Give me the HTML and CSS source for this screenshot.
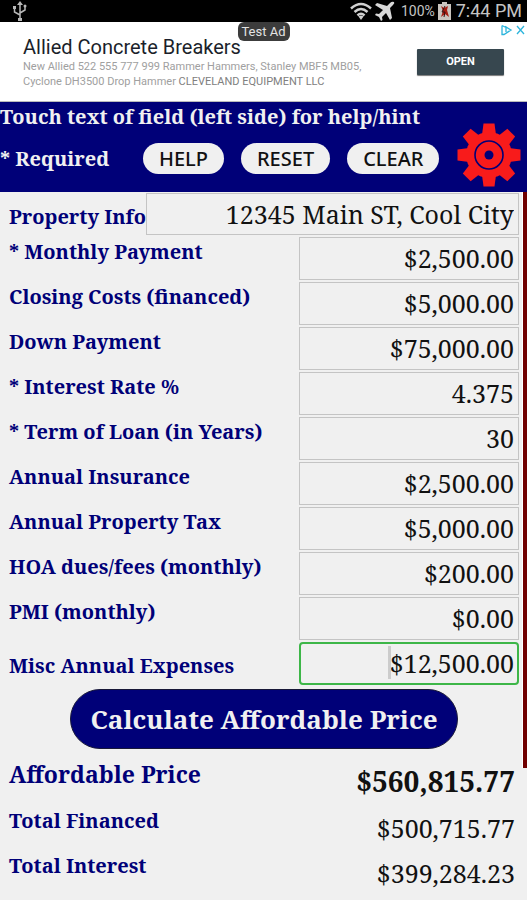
FILE: index.html
```html
<!DOCTYPE html>
<html lang="en">
<head>
<meta charset="utf-8">
<meta name="viewport" content="width=device-width, initial-scale=1">
<title>Affordable Price Calculator</title>
<link rel="stylesheet" href="styles.css">
</head>
<body>
<div class="status">
  <svg class="usb" width="16" height="20" viewBox="0 0 16 20" fill="none" stroke="#b8b8b8" stroke-width="1.5"><path d="M8 17V3M8 14L2.500 11V7M8 12l5-3V5"/><path d="M8 0l3 4H5zM6 17h4v3H6zM1 5h3v3H1z" fill="#b8b8b8" stroke="none"/><circle cx="13" cy="5" r="1.500" fill="#b8b8b8" stroke="none"/></svg>
  <div class="status-right">
    <svg width="22" height="18" viewBox="0 0 22 18" fill="none" stroke="#d0d0d0" stroke-width="2.500"><path d="M1 6.500Q11-2.500 21 6.500M4.500 10Q11 4 17.500 10M7.500 13.500Q11 10 14.500 13.500"/><path d="M8.500 14.500Q11 12.500 13.500 14.500L11 18z" fill="#d0d0d0" stroke="none"/></svg>
    <svg width="20" height="20" viewBox="0 0 20 20" fill="#d8d8d8"><path d="M19 1q-2-1-4 1l-3 3L2 2 0 4l8 5-4 4-3-.5L0 14l4 2 2 4 1.500-1-.5-3 4-4 4 7 2-2-2-10 3-3q2-2 1-3z"/></svg>
    <span class="percent">100%</span>
    <svg width="13" height="18" viewBox="0 0 13 18"><path d="M4 0h5v2h4v16H0V2h4z" fill="#c9c4be"/><path d="M3 4l3 2 4-2-1 4 2 7-4-3-4 3 2-6z" fill="#a51b10"/><path d="M7 4L4 10h3l-1 5" stroke="#301010" fill="none"/></svg>
    <span class="clock">7:44 PM</span>
  </div>
</div>

<aside class="ad">
  <div class="ad-copy">
    <h2>Allied Concrete Breakers</h2>
    <p>New Allied 522 555 777 999 Rammer Hammers, Stanley MBF5 MB05,<br>Cyclone DH3500 Drop Hammer <span>CLEVELAND EQUIPMENT LLC</span></p>
  </div>
  <button class="open">OPEN</button>
  <span class="test-ad">Test Ad</span>
  <svg class="choices" width="26" height="12" viewBox="0 0 26 12" fill="none" stroke="#2bb4dc" stroke-width="1.300"><path d="M2 1.500v9h2l7-4.500-5-3v5M2 1.500l4 2"/><path d="M17 2l7 8M24 2l-7 8"/></svg>
</aside>

<header class="toolbar">
  <p class="hint">Touch text of field (left side) for help/hint</p>
  <div class="actions">
    <span class="required">* Required</span>
    <button>HELP</button>
    <button>RESET</button>
    <button>CLEAR</button>
  </div>
  <button class="settings" aria-label="Settings">
    <svg width="64" height="64" viewBox="-32 -32 64 64"><g fill="#f81b1b"><circle r="23"/><path id="t" d="M-7-20L-5.500-31.500h11L7-20V20L5.500 31.500h-11L-7 20z"/><use href="#t" transform="rotate(45)"/><use href="#t" transform="rotate(90)"/><use href="#t" transform="rotate(135)"/></g><circle r="14" fill="none" stroke="#000078" stroke-width="1.600"/><circle r="4.500" fill="#000078"/></svg>
  </button>
</header>

<main>
  <form class="form">
    <div class="row property"><label for="info">Property Info</label><input id="info" value="12345 Main ST, Cool City"></div>
    <div class="row"><label for="pay">* Monthly Payment</label><input id="pay" value="$2,500.00"></div>
    <div class="row"><label for="closing">Closing Costs (financed)</label><input id="closing" value="$5,000.00"></div>
    <div class="row"><label for="down">Down Payment</label><input id="down" value="$75,000.00"></div>
    <div class="row"><label for="rate">* Interest Rate %</label><input id="rate" value="4.375"></div>
    <div class="row"><label for="term">* Term of Loan (in Years)</label><input id="term" value="30"></div>
    <div class="row"><label for="ins">Annual Insurance</label><input id="ins" value="$2,500.00"></div>
    <div class="row"><label for="tax">Annual Property Tax</label><input id="tax" value="$5,000.00"></div>
    <div class="row"><label for="hoa">HOA dues/fees (monthly)</label><input id="hoa" value="$200.00"></div>
    <div class="row"><label for="pmi">PMI (monthly)</label><input id="pmi" value="$0.00"></div>
    <div class="row active"><label for="misc">Misc Annual Expenses</label><div class="field"><input id="misc" value="$12,500.00"><i class="caret"></i></div></div>
    <button type="button" class="calculate">Calculate Affordable Price</button>
  </form>
  <dl class="results">
    <div class="result total"><dt>Affordable Price</dt><dd>$560,815.77</dd></div>
    <div class="result"><dt>Total Financed</dt><dd>$500,715.77</dd></div>
    <div class="result"><dt>Total Interest</dt><dd>$399,284.23</dd></div>
  </dl>
  <div class="scrollbar"></div>
</main>
</body>
</html>
```
FILE: styles.css
```css
* { box-sizing: border-box; }

body {
  margin: 0;
  background: #f0f0f0;
  color: #111;
  font-family: "Noto Serif", "DejaVu Serif Condensed", "DejaVu Serif", serif;
}

button, input { font: inherit; }
h2, p, dl, dd { margin: 0; }
svg { display: block; }

.status {
  display: flex;
  align-items: center;
  justify-content: space-between;
  height: 22px;
  padding: 0 5px 0 12px;
  background: #000;
  color: #c4c4c4;
  font-family: Roboto, sans-serif;
}
.status-right { display: flex; align-items: center; gap: 3px; }
.percent { margin-left: 3px; font-size: 14px; }
.clock { margin-left: 2px; font-size: 18px; line-height: 22px; }

.ad {
  position: relative;
  display: flex;
  align-items: center;
  justify-content: space-between;
  height: 80px;
  padding: 0 23px;
  background: #fff;
  border-bottom: 1px solid #bbb;
  font-family: Roboto, sans-serif;
}
.ad h2 { color: #1b1f2b; font-size: 20px; font-weight: 400; line-height: 24px; }
.ad p { color: #a0a0a0; font-size: 11px; line-height: 15px; white-space: nowrap; }
.ad p span { color: #808080; }
.open {
  width: 87px;
  height: 26px;
  padding: 0;
  border: 0;
  border-radius: 1px;
  background: #37474f;
  box-shadow: 0 1px 1px #777;
  color: #fff;
  font-size: 11px;
  font-weight: 700;
}
.test-ad {
  position: absolute;
  top: 0;
  left: 50%;
  padding: 0 4px;
  border-radius: 6px;
  background: #3c3c3c;
  color: #e4e4e4;
  font-size: 13px;
  line-height: 19px;
  transform: translateX(-50%);
}
.choices { position: absolute; top: 2px; right: 1px; }

.toolbar {
  position: relative;
  height: 90px;
  padding-top: 4px;
  background: #000078;
  color: #f0f0f0;
  font-weight: 700;
}
.hint { font-size: 20px; line-height: 22px; white-space: nowrap; }
.actions { display: flex; align-items: center; gap: 17px; margin-top: 15px; }
.required { width: 126px; font-size: 20px; }
.actions button {
  height: 31px;
  padding: 0 16px;
  border: 0;
  border-radius: 16px;
  background: #f0f0f0;
  color: #111;
  font: 500 20px "Noto Sans", sans-serif;
}
.settings {
  position: absolute;
  top: 21px;
  right: 6px;
  padding: 0;
  border: 0;
  background: none;
}

main { position: relative; padding: 1px 8px 0 9px; }
.row {
  display: flex;
  align-items: flex-start;
  justify-content: space-between;
  margin-bottom: 2px;
  color: #000078;
}
.row label { padding-top: 3px; font-size: 20px; font-weight: 700; line-height: 24px; white-space: nowrap; }
.row input {
  width: 220px;
  height: 43px;
  padding: 0 4px 2px;
  border: 1px solid #c4c4c4;
  outline: 0;
  background: #f0f0f0;
  color: #111;
  font-size: 25px;
  text-align: right;
}
.row.property label { padding-top: 12px; }
.row.property input { flex: 1; min-width: 0; height: 42px; padding-bottom: 0; }
.row.active label { padding-top: 12px; }
.row.active input { border: 2px solid #3db648; border-radius: 4px; padding: 0 3px 2px; }
.field { position: relative; }
.caret { position: absolute; top: 4px; right: 128px; width: 3px; height: 33px; background: #ccc; }

.calculate {
  display: block;
  height: 60px;
  margin: 4px auto 0;
  padding: 0 19px;
  border: 1px solid #181838;
  border-radius: 30px;
  background: #000078;
  color: #f0f0f0;
  font-size: 26px;
  font-weight: 700;
  white-space: nowrap;
}

.results { padding: 13px 4px 0 0; }
.result { display: flex; justify-content: space-between; height: 45px; }
.result dt { color: #000078; font-size: 20px; font-weight: 700; line-height: 24px; }
.result dd { padding-top: 3px; font-size: 25px; line-height: 32px; }
.result.total { height: 47px; }
.total dt { font-size: 23px; }
.total dd { font-size: 28px; font-weight: 700; }

.scrollbar {
  position: absolute;
  top: 0;
  right: 0;
  width: 5px;
  height: 576px;
  border-left: 1px solid #fff;
  background: #700000;
}
```
